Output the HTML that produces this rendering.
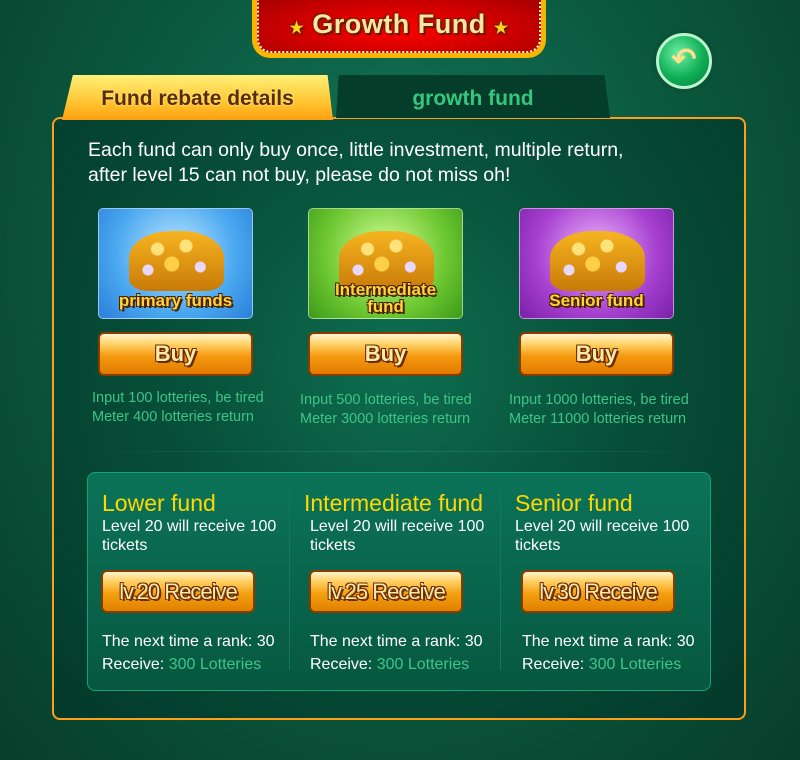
<!DOCTYPE html>
<html><head><meta charset="utf-8"><style>
*{margin:0;padding:0;box-sizing:border-box}
body{width:800px;height:760px;overflow:hidden;font-family:"Liberation Sans",sans-serif;background:radial-gradient(ellipse at 50% 35%,#13795a 0%,#0b5a40 50%,#073d2b 100%);position:relative}
.abs{position:absolute}
.title{left:252px;top:-10px;width:294px;height:68px;border-radius:0 0 18px 18px;background:#f7b400;padding:5px}
.title .in{width:100%;height:100%;border-radius:0 0 14px 14px;background:radial-gradient(ellipse at 50% 60%,#f00 0%,#c00000 70%,#a00000 100%);border:2px dotted #fff8d0;text-align:center;padding-top:12px;font:bold 27px "Liberation Sans",sans-serif;color:#ffe6a0;text-shadow:0 0 3px #6a1a00,2px 2px 0 #6a1a00,-1px -1px 0 #6a1a00;letter-spacing:.5px}
.back{left:656px;top:33px;width:56px;height:56px;border-radius:50%;background:radial-gradient(circle at 40% 35%,#6ef0a6,#0fae55 55%,#067a3a);border:3px solid #b9f6cf;box-shadow:0 0 0 4px rgba(10,80,50,.6);color:#ffe08a;font:bold 30px sans-serif;text-align:center;line-height:48px}
.tab1{left:62px;top:75px;width:271px;height:45px;background:linear-gradient(#fff077,#ffc532 60%,#ff9f10);clip-path:polygon(4% 0,98% 0,100% 100%,0 100%);border-radius:6px 6px 0 0;text-align:center;font:bold 21px "Liberation Sans",sans-serif;color:#5a2c00;padding-top:12px;text-shadow:0 0 2px #fff6b0}
.tab2{left:336px;top:75px;width:274px;height:43px;background:#053d2b;clip-path:polygon(1% 0,98% 0,100% 100%,0 100%);text-align:center;font:bold 21px "Liberation Sans",sans-serif;color:#37c67e;padding-top:12px}
.panel{left:52px;top:117px;width:694px;height:603px;border:2.5px solid #ff9e1a;border-radius:8px;background:radial-gradient(ellipse at 50% 40%,#0e6e4f 0%,#07503a 45%,#03392a 100%)}
.intro{left:88px;top:138px;color:#fff;font-size:19.5px;line-height:25px}
.card{width:155px;height:111px;border-radius:5px;border:1px solid rgba(255,255,255,.5);overflow:hidden;text-align:center;font:bold 17px "Liberation Sans",sans-serif;color:#ffd53a;text-shadow:2px 2px 0 #4a2000,-1px -1px 0 #4a2000,1px -1px 0 #4a2000,-1px 1px 0 #4a2000;line-height:17px}
.coins{position:absolute;left:30px;top:22px;width:95px;height:60px;border-radius:45% 45% 20% 20%;background:radial-gradient(circle at 30% 30%,#ffe27a 0 6px,transparent 7px),radial-gradient(circle at 60% 25%,#ffe27a 0 6px,transparent 7px),radial-gradient(circle at 45% 55%,#ffcf4a 0 7px,transparent 8px),radial-gradient(circle at 75% 60%,#e8d8ff 0 5px,transparent 6px),radial-gradient(circle at 20% 65%,#e8d8ff 0 5px,transparent 6px),linear-gradient(#f6b420,#c87a08)}
.lbl{position:absolute;left:0;right:0}
.buy{width:155px;height:44px;border-radius:6px;border:2px solid #8a3b00;background:linear-gradient(#fff5d0 0,#ffd36a 25%,#f59a10 55%,#e07a00 100%);text-align:center;font:bold 22px "Liberation Sans",sans-serif;color:#ffe9a8;text-shadow:2px 2px 0 #6a2c00,-1px -1px 0 #6a2c00,1px -1px 0 #6a2c00,-1px 1px 0 #6a2c00;line-height:40px}
.info{color:#3fc488;font-size:14.5px;line-height:19px}
.sep{left:88px;top:451px;width:622px;height:1px;background:linear-gradient(90deg,transparent,#1a7a5a,transparent)}
.box{left:87px;top:472px;width:624px;height:219px;border:1px solid #17a07a;border-radius:8px;background:linear-gradient(#0b7359,#06583f)}
.col{top:490px;width:200px;color:#fff;font-size:16px;line-height:19px}
.col h3{color:#ffd800;font-size:23px;font-weight:normal;line-height:27px;white-space:nowrap}
.rbtn{width:154px;height:43px;border-radius:6px;border:2px solid #8a3b00;background:linear-gradient(#fff5d0 0,#ffd36a 22%,#f5a010 55%,#e08000 100%);text-align:center;font:22px "Liberation Sans",sans-serif;color:#ffe9a8;text-shadow:2px 2px 0 #6a2c00,-1px -1px 0 #6a2c00,1px -1px 0 #6a2c00,-1px 1px 0 #6a2c00;line-height:39px;margin:15px 0 0 -1px;letter-spacing:-1px}
.g{color:#3fc488}
.vsep{top:492px;width:1px;height:178px;background:#0f7a5c}
</style></head><body>
<div class="abs title"><div class="in"><span style="color:#ffd21a;font-size:16px">★</span> Growth Fund <span style="color:#ffd21a;font-size:16px">★</span></div></div>
<div class="abs back">↶</div>
<div class="abs panel"></div>
<div class="abs tab1">Fund rebate details</div>
<div class="abs tab2">growth fund</div>
<div class="abs intro">Each fund can only buy once, little investment, multiple return,<br>after level 15 can not buy, please do not miss oh!</div>

<div class="abs card" style="left:98px;top:208px;background:radial-gradient(circle at 50% 40%,#bfe8ff,#4aa8f0 60%,#2a7fd8)"><div class="coins"></div><div class="lbl" style="top:83px">primary funds</div></div>
<div class="abs card" style="left:308px;top:208px;background:radial-gradient(circle at 50% 40%,#d8ff9a,#6ec832 60%,#3c9a18)"><div class="coins"></div><div class="lbl" style="top:72px">Intermediate<br>fund</div></div>
<div class="abs card" style="left:519px;top:208px;background:radial-gradient(circle at 50% 40%,#f0b8ff,#a640d0 60%,#7a20a8)"><div class="coins"></div><div class="lbl" style="top:83px">Senior fund</div></div>

<div class="abs buy" style="left:98px;top:332px">Buy</div>
<div class="abs buy" style="left:308px;top:332px">Buy</div>
<div class="abs buy" style="left:519px;top:332px">Buy</div>

<div class="abs info" style="left:92px;top:389px">Input 100 lotteries, be tired<br>Meter 400 lotteries return</div>
<div class="abs info" style="left:300px;top:391px">Input 500 lotteries, be tired<br>Meter 3000 lotteries return</div>
<div class="abs info" style="left:509px;top:391px">Input 1000 lotteries, be tired<br>Meter 11000 lotteries return</div>

<div class="abs sep"></div>
<div class="abs box"></div>
<div class="abs vsep" style="left:289px"></div>
<div class="abs vsep" style="left:500px"></div>

<div class="abs col" style="left:102px"><h3>Lower fund</h3>Level 20 will receive 100<br>tickets<div class="rbtn">lv.20 Receive</div><div style="margin-top:17px;line-height:23px">The next time a rank: 30<br>Receive: <span class="g">300 Lotteries</span></div></div>
<div class="abs col" style="left:304px;width:200px"><h3 style="margin-left:0">Intermediate fund</h3><div style="margin-left:6px">Level 20 will receive 100<br>tickets<div class="rbtn">lv.25 Receive</div><div style="margin-top:17px;line-height:23px">The next time a rank: 30<br>Receive: <span class="g">300 Lotteries</span></div></div></div>
<div class="abs col" style="left:515px"><h3>Senior fund</h3>Level 20 will receive 100<br>tickets<div class="rbtn" style="margin-left:6px">lv.30 Receive</div><div style="margin-top:17px;line-height:23px;margin-left:7px">The next time a rank: 30<br>Receive: <span class="g">300 Lotteries</span></div></div>
</body></html>
